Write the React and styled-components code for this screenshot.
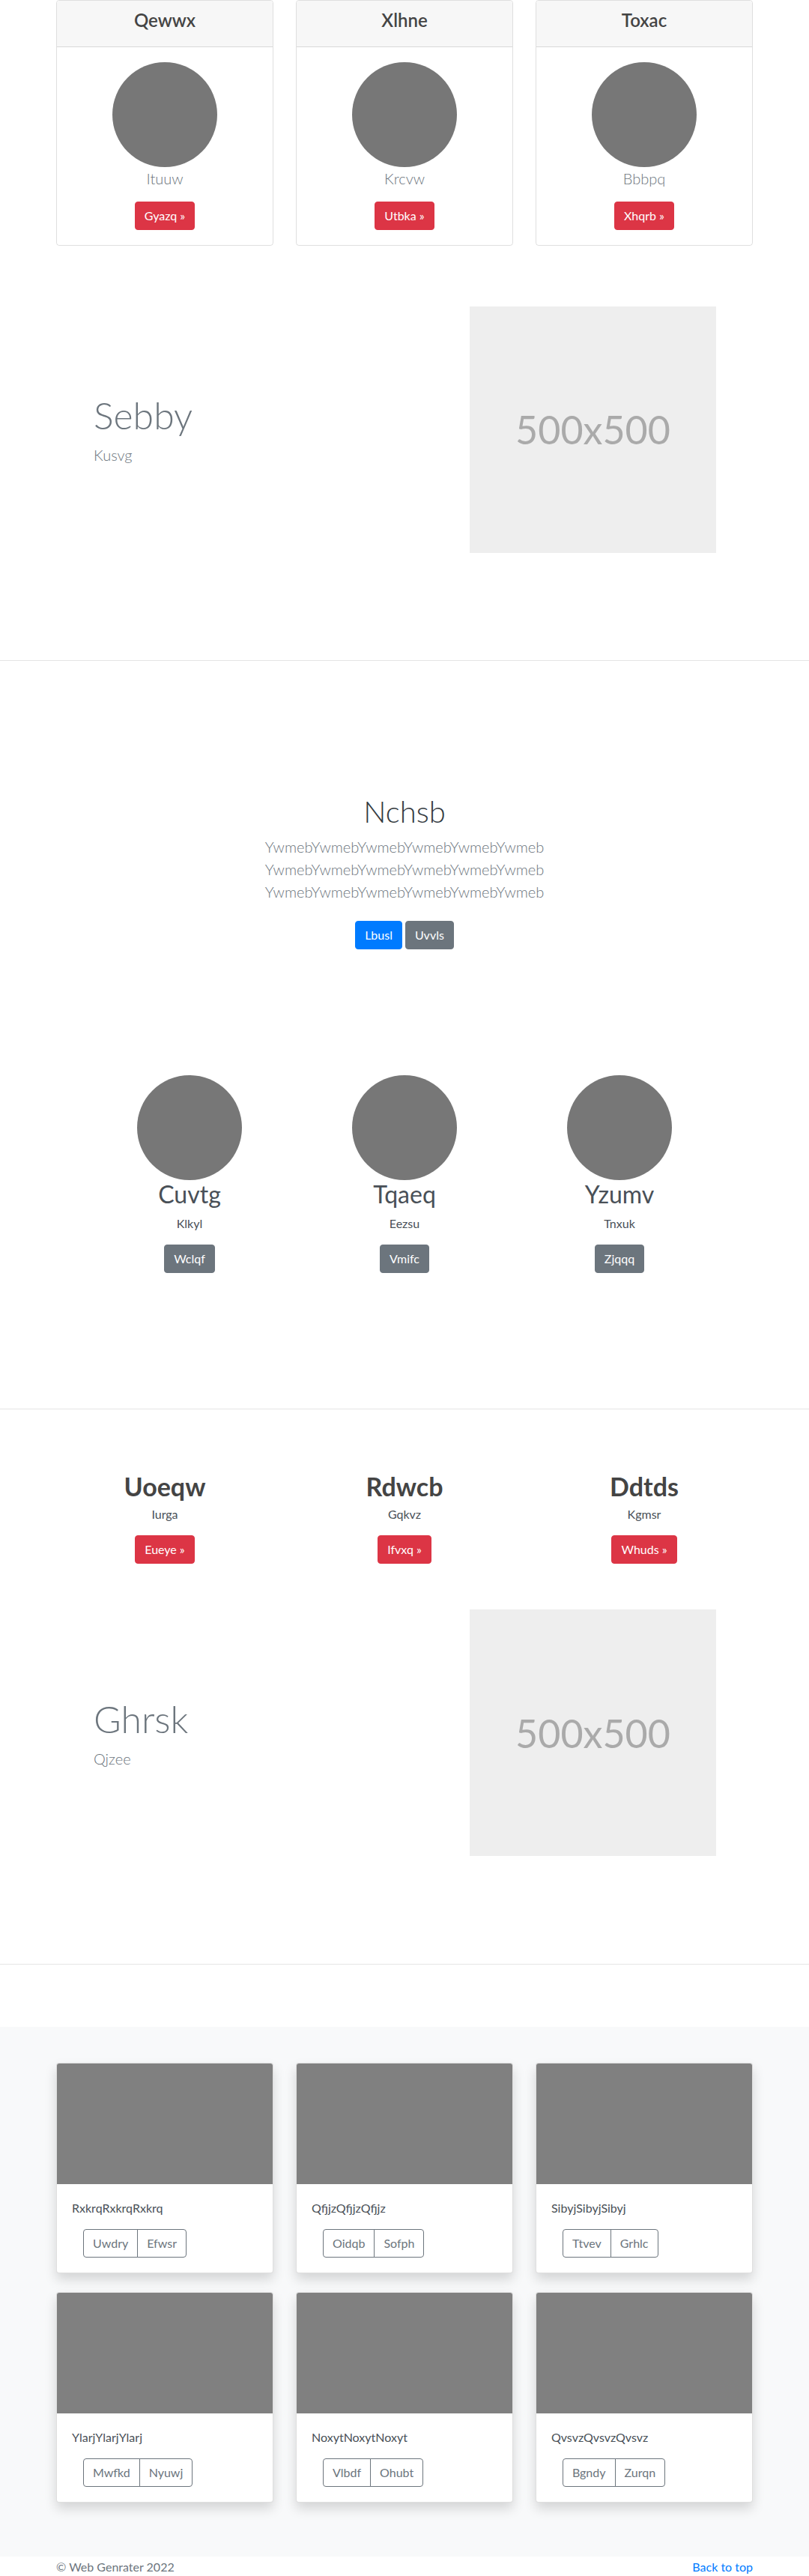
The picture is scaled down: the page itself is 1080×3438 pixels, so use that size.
import React from 'react';
import styled, { createGlobalStyle } from 'styled-components';

// --------------------------------------------------
//   Global
// --------------------------------------------------

const GlobalStyle = createGlobalStyle`
  body {
    margin: 0;
    font-family: Lato, "Open Sans", sans-serif;
    font-size: 16px;
    line-height: 1.5;
    color: #212529;
    background: #fff;
  }
  * { box-sizing: border-box; }
`;

const Container = styled.div`
  width: 960px;
  margin: 0 auto;
  padding: 0 15px;
`;

const Button = styled.a`
  display: inline-block;
  height: 38px;
  padding: 6px 12px;
  font-size: 16px;
  line-height: 24px;
  border-radius: 4px;
  color: #fff;
  text-decoration: none;
  background: ${(p) => p.bg || '#dc3545'};
  border: 1px solid ${(p) => p.bg || '#dc3545'};
`;

const Divider = styled.hr`
  margin: 0;
  border: 0;
  border-top: 1px solid rgba(0, 0, 0, 0.1);
`;

// --------------------------------------------------
//   Pricing cards
// --------------------------------------------------

const CardGrid = styled.div`
  display: grid;
  grid-template-columns: repeat(3, 290px);
  column-gap: 30px;
`;

const PriceCard = styled.div`
  border: 1px solid rgba(0, 0, 0, 0.125);
  border-radius: 4px;
  text-align: center;
  overflow: hidden;
`;

const PriceHeader = styled.div`
  background: #f7f7f7;
  border-bottom: 1px solid rgba(0, 0, 0, 0.125);
  padding: 12px 20px;
`;

const PriceTitle = styled.h4`
  margin: 0 0 8px;
  font-size: 24px;
  font-weight: 600;
  line-height: 1.2;
  color: #444;
`;

const PriceBody = styled.div`
  padding: 20px;
`;

const Circle = styled.div`
  width: 140px;
  height: 140px;
  border-radius: 50%;
  background: #777;
  margin: 0 auto;
`;

const Lead = styled.p`
  margin: 0 0 16px;
  font-size: 20px;
  font-weight: 300;
  line-height: 30px;
  color: #6c757d;
`;

// --------------------------------------------------
//   Feature (text + placeholder)
// --------------------------------------------------

const FeatureSection = styled.div`
  padding: ${(p) => p.pad};
`;

const FeatureRow = styled.div`
  display: flex;
  align-items: center;
`;

const FeatureText = styled.div`
  flex: 1;
  padding-left: 50px;
`;

const FeatureTitle = styled.h2`
  margin: 0 0 8px;
  font-size: 50px;
  font-weight: 300;
  line-height: 1.2;
  color: #6c757d;
`;

const FeatureSub = styled.p`
  margin: 0;
  font-size: 20px;
  font-weight: 300;
  line-height: 30px;
  color: #6c757d;
`;

const Placeholder = styled.div`
  width: 329px;
  height: 329px;
  margin-right: 49px;
  background: #eee;
  color: #aaa;
  font-size: 52px;
  font-weight: 400;
  display: flex;
  align-items: center;
  justify-content: center;
`;

// --------------------------------------------------
//   Hero
// --------------------------------------------------

const Hero = styled.div`
  padding: 177px 0 0;
  text-align: center;
`;

const HeroTitle = styled.h1`
  margin: 0 0 8px;
  font-size: 40px;
  font-weight: 300;
  line-height: 1.2;
  color: #343a40;
`;

const HeroLead = styled.p`
  margin: 0 0 16px;
  font-size: 20px;
  font-weight: 300;
  line-height: 30px;
  color: #6c757d;
`;

const LeadLine = styled.span`
  display: block;
  white-space: nowrap;
`;

const ButtonPair = styled.div`
  display: flex;
  justify-content: center;
  gap: 4px;
  padding-top: 8px;
`;

// --------------------------------------------------
//   Team
// --------------------------------------------------

const TeamGrid = styled.div`
  display: grid;
  grid-template-columns: repeat(3, 287px);
  justify-content: center;
  padding: 168px 0 181px;
  text-align: center;
`;

const TeamName = styled.h2`
  margin: 0 0 8px;
  font-size: 32px;
  font-weight: 400;
  line-height: 1.2;
  color: #495057;
`;

const TeamRole = styled.p`
  margin: 0 0 16px;
  font-size: 16px;
  color: #495057;
`;

// --------------------------------------------------
//   Marketing columns
// --------------------------------------------------

const MarketGrid = styled.div`
  display: grid;
  grid-template-columns: repeat(3, 290px);
  column-gap: 30px;
  padding-top: 84px;
  text-align: center;
`;

const MarketTitle = styled.h2`
  margin: 0 0 6px;
  font-size: 34px;
  font-weight: 700;
  line-height: 38px;
  color: #444;
`;

const MarketText = styled.p`
  margin: 0 0 16px;
  font-size: 16px;
  color: #495057;
`;

// --------------------------------------------------
//   Album
// --------------------------------------------------

const Album = styled.div`
  margin-top: 83px;
  background: #f8f9fa;
  padding: 48px 0 47px;
`;

const AlbumGrid = styled.div`
  display: grid;
  grid-template-columns: repeat(3, 290px);
  column-gap: 30px;
`;

const AlbumCard = styled.div`
  background: #fff;
  border: 1px solid rgba(0, 0, 0, 0.125);
  border-radius: 4px;
  overflow: hidden;
  margin-bottom: 25px;
  box-shadow: 0 8px 16px rgba(0, 0, 0, 0.15);
`;

const Thumb = styled.div`
  height: 161px;
  background: #808080;
`;

const AlbumBody = styled.div`
  padding: 20px;
`;

const AlbumText = styled.p`
  margin: 0 0 16px;
  font-size: 16px;
  color: #495057;
`;

const BtnGroup = styled.div`
  display: inline-flex;
  margin-left: 15px;
`;

const OutlineBtn = styled.a`
  height: 38px;
  padding: 6px 12px;
  font-size: 16px;
  line-height: 24px;
  color: #6c757d;
  border: 1px solid #6c757d;
  text-decoration: none;
  &:first-child {
    border-radius: 4px 0 0 4px;
  }
  &:last-child {
    border-radius: 0 4px 4px 0;
    margin-left: -1px;
  }
`;

const Footer = styled.footer`
  padding-top: 2px;
  display: flex;
  justify-content: space-between;
  color: #6c757d;
`;

const FooterLink = styled.a`
  color: #007bff;
  text-decoration: none;
`;

// --------------------------------------------------
//   Data
// --------------------------------------------------

const pricing = [
  { title: 'Qewwx', text: 'Ituuw', btn: 'Gyazq »' },
  { title: 'Xlhne', text: 'Krcvw', btn: 'Utbka »' },
  { title: 'Toxac', text: 'Bbbpq', btn: 'Xhqrb »' },
];

const leadLines = [
  'YwmebYwmebYwmebYwmebYwmebYwmeb',
  'YwmebYwmebYwmebYwmebYwmebYwmeb',
  'YwmebYwmebYwmebYwmebYwmebYwmeb',
];

const team = [
  { name: 'Cuvtg', role: 'Klkyl', btn: 'Wclqf' },
  { name: 'Tqaeq', role: 'Eezsu', btn: 'Vmifc' },
  { name: 'Yzumv', role: 'Tnxuk', btn: 'Zjqqq' },
];

const market = [
  { title: 'Uoeqw', text: 'Iurga', btn: 'Eueye »' },
  { title: 'Rdwcb', text: 'Gqkvz', btn: 'Ifvxq »' },
  { title: 'Ddtds', text: 'Kgmsr', btn: 'Whuds »' },
];

const album = [
  { text: 'RxkrqRxkrqRxkrq', a: 'Uwdry', b: 'Efwsr' },
  { text: 'QfjjzQfjjzQfjjz', a: 'Oidqb', b: 'Sofph' },
  { text: 'SibyjSibyjSibyj', a: 'Ttvev', b: 'Grhlc' },
  { text: 'YlarjYlarjYlarj', a: 'Mwfkd', b: 'Nyuwj' },
  { text: 'NoxytNoxytNoxyt', a: 'Vlbdf', b: 'Ohubt' },
  { text: 'QvsvzQvsvzQvsvz', a: 'Bgndy', b: 'Zurqn' },
];

// --------------------------------------------------
//   App
// --------------------------------------------------

export default function App() {
  return (
    <React.Fragment>
      <GlobalStyle />

      <Container>
        <CardGrid>
          {pricing.map((c) => (
            <PriceCard key={c.title}>
              <PriceHeader>
                <PriceTitle>{c.title}</PriceTitle>
              </PriceHeader>
              <PriceBody>
                <Circle />
                <Lead>{c.text}</Lead>
                <Button>{c.btn}</Button>
              </PriceBody>
            </PriceCard>
          ))}
        </CardGrid>

        <FeatureSection pad="81px 0 143px">
          <FeatureRow>
            <FeatureText>
              <FeatureTitle>Sebby</FeatureTitle>
              <FeatureSub>Kusvg</FeatureSub>
            </FeatureText>
            <Placeholder>500x500</Placeholder>
          </FeatureRow>
        </FeatureSection>
      </Container>

      <Divider />

      <Container>
        <Hero>
          <HeroTitle>Nchsb</HeroTitle>
          <HeroLead>
            {leadLines.map((l, i) => (
              <LeadLine key={i}>{l}</LeadLine>
            ))}
          </HeroLead>
          <ButtonPair>
            <Button bg="#007bff">Lbusl</Button>
            <Button bg="#6c757d">Uvvls</Button>
          </ButtonPair>
        </Hero>

        <TeamGrid>
          {team.map((t) => (
            <div key={t.name}>
              <Circle />
              <TeamName>{t.name}</TeamName>
              <TeamRole>{t.role}</TeamRole>
              <Button bg="#6c757d">{t.btn}</Button>
            </div>
          ))}
        </TeamGrid>
      </Container>

      <Divider />

      <Container>
        <MarketGrid>
          {market.map((m) => (
            <div key={m.title}>
              <MarketTitle>{m.title}</MarketTitle>
              <MarketText>{m.text}</MarketText>
              <Button>{m.btn}</Button>
            </div>
          ))}
        </MarketGrid>

        <FeatureSection pad="61px 0 144px">
          <FeatureRow>
            <FeatureText>
              <FeatureTitle>Ghrsk</FeatureTitle>
              <FeatureSub>Qjzee</FeatureSub>
            </FeatureText>
            <Placeholder>500x500</Placeholder>
          </FeatureRow>
        </FeatureSection>
      </Container>

      <Divider />

      <Album>
        <Container>
          <AlbumGrid>
            {album.map((a) => (
              <AlbumCard key={a.text}>
                <Thumb />
                <AlbumBody>
                  <AlbumText>{a.text}</AlbumText>
                  <BtnGroup>
                    <OutlineBtn>{a.a}</OutlineBtn>
                    <OutlineBtn>{a.b}</OutlineBtn>
                  </BtnGroup>
                </AlbumBody>
              </AlbumCard>
            ))}
          </AlbumGrid>
        </Container>
      </Album>

      <Container>
        <Footer>
          <span>© Web Genrater 2022</span>
          <FooterLink>Back to top</FooterLink>
        </Footer>
      </Container>
    </React.Fragment>
  );
}
